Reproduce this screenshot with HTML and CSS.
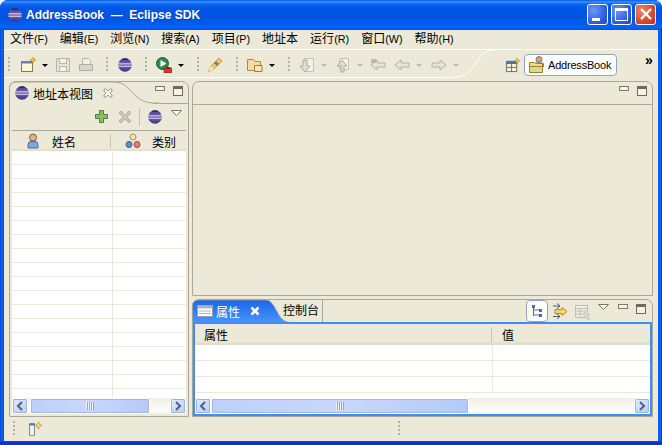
FILE: index.html
```html
<!DOCTYPE html>
<html lang="zh">
<head>
<meta charset="utf-8">
<title>AddressBook - Eclipse SDK</title>
<link rel="stylesheet" href="styles.css">
</head>
<body>
<div class="window">
  <header class="titlebar">
    <svg class="i16 app" viewBox="0 0 16 16"><use href="#eclipse"/></svg>
    <span class="title">AddressBook  —  Eclipse SDK</span>
    <div class="caption">
      <span class="cap"><i class="g-min"></i></span>
      <span class="cap"><i class="g-max"></i></span>
      <span class="cap close"><svg viewBox="0 0 12 12" width="12" height="12"><path d="M1 1l10 10M11 1L1 11" stroke="#fff" stroke-width="2.4"/></svg></span>
    </div>
  </header>
  <div class="client">
    <nav class="menu">
      <span>文件<small>(F)</small></span><span>编辑<small>(E)</small></span><span>浏览<small>(N)</small></span><span>搜索<small>(A)</small></span><span>项目<small>(P)</small></span><span>地址本</span><span>运行<small>(R)</small></span><span>窗口<small>(W)</small></span><span>帮助<small>(H)</small></span>
    </nav>
    <div class="toolbar">
      <svg class="curve" width="654" height="31" viewBox="0 0 654 31"><path d="M0 .5H654M490 .5C474 .5 470 25 458 27C452 28.500 448 28.500 440 28.500H0" stroke="#fff" fill="none"/></svg>
      <i class="grip g1"></i>
      <svg class="tb m1" viewBox="0 0 16 16"><path d="M1.500 4.500h11v10h-11z" fill="#fdf7d8" stroke="#8a7a3e"/><path d="M1.500 4.500h11v2h-11z" fill="#5a8ac6"/><path d="M13 0l1 2 2 1-2 1-1 2-1-2-2-1 2-1z" fill="#f4c430" stroke="#a8801a" stroke-width=".5"/></svg>
      <i class="arrow on m2"></i>
      <svg class="tb m4" viewBox="0 0 16 16"><path d="M1.500 1.500h13v13h-13z" fill="#e4e2da" stroke="#b8b6ac"/><path d="M4.500 1.500h7v5h-7zM4.500 9.500h7v5h-7z" fill="#f2f1ea" stroke="#b8b6ac"/></svg>
      <svg class="tb m5" viewBox="0 0 16 16"><path d="M4.500 1.500h6l2 2v4h-8z" fill="#f0efe8" stroke="#b8b6ac"/><path d="M1.500 7.500h13v6h-13z" fill="#d8d6cc" stroke="#b0aea4"/></svg>
      <i class="grip m6"></i>
      <svg class="tb m7" viewBox="0 0 16 16"><use href="#eclipse"/></svg>
      <i class="grip m8"></i>
      <svg class="tb m9" viewBox="0 0 16 16"><circle cx="6.500" cy="6.500" r="6" fill="#2f8a52" stroke="#1f5f3a"/><path d="M4.500 3l6 3.500-6 3.500z" fill="#fff"/><path d="M8 11h8v5H8z" fill="#d8382c" stroke="#8a1c14" stroke-width=".6"/><path d="M10 10h4v1.500h-4z" fill="#8a1c14"/></svg>
      <i class="arrow on m10"></i>
      <i class="grip m11"></i>
      <svg class="tb m12" viewBox="0 0 16 16"><path d="M1 15l3-6 8-8 3 3-8 8z" fill="#f0c860" stroke="#a88420" stroke-width=".7"/><path d="M4 9l3 3-6 3z" fill="#fbeeb4"/><path d="M7 6l3 3 2-2-3-3z" fill="#7c7c74"/></svg>
      <i class="grip m13"></i>
      <svg class="tb m14" viewBox="0 0 16 16"><path d="M.5 2.500h6l1.500 2h5.500v9H.5z" fill="#f6dc9c" stroke="#b08a3e"/><path d="M7.500 8.500h7.500v6H7.500z" fill="#f9e6b4" stroke="#a07c34"/></svg>
      <i class="arrow on m15"></i>
      <i class="grip m16"></i>
      <svg class="tb m17" viewBox="0 0 16 16"><path d="M5.500 1.500h9v13h-9z" fill="#f2f1ea" stroke="#c4c2b8"/><path d="M4 3v6H1l5 6 5-6H8V3z" fill="#dfddd2" stroke="#aeaca2"/></svg>
      <i class="arrow m18"></i>
      <svg class="tb m19" viewBox="0 0 16 16"><path d="M4.500 1.500h9v11h-9z" fill="#f2f1ea" stroke="#c4c2b8"/><path d="M6 15V9H2l5-6 5 6H9v6z" fill="#dfddd2" stroke="#aeaca2"/></svg>
      <i class="arrow m20"></i>
      <svg class="tb m21" viewBox="0 0 16 16"><path d="M1 8l6-5v3h8v4H7v3z" fill="#e6e4da" stroke="#b4b2a8"/><path d="M1 2h5v4H1z" fill="#a8a69c" opacity=".7"/></svg>
      <svg class="tb m22" viewBox="0 0 16 16"><path d="M1 8l6-5v3h8v4H7v3z" fill="#e6e4da" stroke="#b4b2a8"/></svg>
      <i class="arrow m23"></i>
      <svg class="tb m24" viewBox="0 0 16 16"><path d="M15 8L9 3v3H1v4h8v3z" fill="#e6e4da" stroke="#b4b2a8"/></svg>
      <i class="arrow m25"></i>
      <svg class="persp-new" viewBox="0 0 16 16"><path d="M1.500 3.500h11v11h-11z" fill="#f6f3e2" stroke="#6e6648"/><path d="M1.500 3.500h11v3h-11z" fill="#4a74b0"/><path d="M7 6.500v8M1.500 10h11" stroke="#6e6648" fill="none"/><path d="M13 0l1 2 2 1-2 1-1 2-1-2-2-1 2-1z" fill="#f4c430" stroke="#a8801a" stroke-width=".5"/></svg>
      <div class="persp">
        <svg class="i16 ab" viewBox="0 0 18 18"><use href="#folderperson"/></svg>
        <span>AddressBook</span>
      </div>
      <span class="more">»</span>
    </div>
    <main class="workspace">
      <section class="panel left">
        <div class="tabhead">
          <div class="tabshape">
            <svg class="shape" width="150" height="24" viewBox="0 0 150 24"><path d="M0 23V8Q0 1 7 1H106C122 1 124 22 144 22H150" fill="none" stroke="#aca899"/></svg>
            <svg class="i16 tabicon" viewBox="0 0 16 16"><use href="#eclipse"/></svg>
            <span class="tablabel">地址本视图</span>
            <svg class="tabx" viewBox="0 0 10 10"><path d="M1 1h2l2 2 2-2h2v2L7 5l2 2v2H7L5 7 3 9H1V7l2-2-2-2z" fill="#f4f2e8" stroke="#8a887e" stroke-width=".8"/></svg>
          </div>
          <div class="winctl"><i class="minb"></i><i class="maxb"></i></div>
        </div>
        <div class="viewbar">
          <svg class="tb" viewBox="0 0 16 16"><path d="M5.500 1.500h4v4h4v4h-4v4h-4v-4h-4v-4h4z" fill="#8fc04a" stroke="#4a7a68"/></svg>
          <svg class="tb vdel" viewBox="0 0 16 16"><path d="M2 4l2-2 4 4 4-4 2 2-4 4 4 4-2 2-4-4-4 4-2-2 4-4z" fill="#c8c6bc" stroke="#b4b2a8"/></svg>
          <i class="vsep"></i>
          <svg class="tb" viewBox="0 0 16 16"><use href="#eclipse"/></svg>
          <svg class="dropdown" viewBox="0 0 11 6"><path d="M.5 .5h10l-5 5z" fill="#fbfaf4" stroke="#7b7968"/></svg>
        </div>
        <div class="table tleft">
          <div class="thead">
            <div class="th c1">
              <svg class="i16" viewBox="0 0 16 16"><circle cx="8" cy="4.500" r="3.500" fill="#e8b088" stroke="#7c5a44"/><path d="M3 15v-3.500Q3 8.500 6 8.500h4q3 0 3 3V15z" fill="#7ca8d8" stroke="#4a6f9c"/></svg>
              <span>姓名</span>
            </div>
            <div class="th c2">
              <svg class="i16" viewBox="0 0 16 16"><circle cx="8" cy="4" r="3" fill="#f0e8a0" stroke="#a09a58"/><circle cx="4" cy="11.500" r="3" fill="#5a90c8" stroke="#3a6088"/><circle cx="12" cy="11.500" r="3" fill="#f07878" stroke="#a04848"/></svg>
              <span>类别</span>
            </div>
          </div>
          <div class="rows">
            <div class="row"><i></i><i></i></div><div class="row"><i></i><i></i></div><div class="row"><i></i><i></i></div><div class="row"><i></i><i></i></div><div class="row"><i></i><i></i></div><div class="row"><i></i><i></i></div><div class="row"><i></i><i></i></div><div class="row"><i></i><i></i></div><div class="row"><i></i><i></i></div><div class="row"><i></i><i></i></div><div class="row"><i></i><i></i></div><div class="row"><i></i><i></i></div><div class="row"><i></i><i></i></div><div class="row"><i></i><i></i></div><div class="row"><i></i><i></i></div><div class="row"><i></i><i></i></div><div class="row"><i></i><i></i></div><div class="row"><i></i><i></i></div>
          </div>
          <div class="hscroll">
            <span class="sbtn"><svg viewBox="0 0 8 10" width="8" height="10"><path d="M6 1L2 5l4 4" fill="none" stroke="#4d6185" stroke-width="2"/></svg></span>
            <span class="thumb t-left"><i class="ticks"></i></span>
            <span class="sbtn end"><svg viewBox="0 0 8 10" width="8" height="10"><path d="M2 1l4 4-4 4" fill="none" stroke="#4d6185" stroke-width="2"/></svg></span>
          </div>
        </div>
      </section>
      <div class="rightcol">
        <section class="panel editor">
          <div class="edhead"><div class="winctl"><i class="minb"></i><i class="maxb"></i></div></div>
        </section>
        <section class="panel bottom">
          <div class="btabs">
            <div class="acttab">
              <svg class="shape" width="97" height="24" viewBox="0 0 97 24"><path d="M.5 24V7Q.5 1 6.500 1H74C84 1 85 23 97 23V24z" fill="url(#blue)" stroke="#aca899" stroke-width=".7"/></svg>
              <svg class="i16 tabicon" viewBox="0 0 16 16"><path d="M.5 2.500h15v11H.5z" fill="#fff" stroke="#8fa0b8"/><path d="M.5 2.500h15v3H.5z" fill="#a8b4c4"/><path d="M2 8h12M2 10.500h12" stroke="#a8b4c4"/></svg>
              <span class="tablabel">属性</span>
              <svg class="activex" viewBox="0 0 10 10"><path d="M1.500 1.500l7 7M8.500 1.500l-7 7" stroke="#fff" stroke-width="2.600"/></svg>
            </div>
            <div class="othertab">控制台</div>
            <div class="bctl">
              <span class="toggle"><svg viewBox="0 0 16 16" width="16" height="16"><path d="M4.500 3v10M4.500 7h6M4.500 12h6" stroke="#4a6a98" fill="none"/><path d="M3 2h3v3H3zM10 6h3v3h-3zM10 11h3v3h-3z" fill="#4a6a98"/></svg></span>
              <svg class="tb bc1" viewBox="0 0 16 16"><path d="M1 3h7M5 0.500l3 2.500-3 2.500M1 13.500h7M5 11l3 2.500-3 2.500" stroke="#4e5e70" fill="none"/><path d="M3 6.500h7V4.500l5 4-5 4v-2H3z" fill="#f8d868" stroke="#c08818"/></svg>
              <svg class="tb bc2" viewBox="0 0 16 16"><path d="M.5 1.500h12v12H.5z" fill="#efeee6" stroke="#c0beb4"/><path d="M.5 1.500h12v3H.5zM.5 7h12M.5 10h12M5 4v9" fill="none" stroke="#c0beb4"/><path d="M9 8l6 3-2 1 2 3-2 1-2-3-2 1z" fill="#dcdad0" stroke="#b8b6ac" stroke-width=".5"/></svg>
              <svg class="dropdown bd" viewBox="0 0 11 6"><path d="M.5 .5h10l-5 5z" fill="#fbfaf4" stroke="#7b7968"/></svg>
              <div class="winctl"><i class="minb"></i><i class="maxb"></i></div>
            </div>
          </div>
          <div class="table tbottom">
            <div class="thead">
              <div class="th b1"><span>属性</span></div>
              <div class="th b2"><span>值</span></div>
            </div>
            <div class="rows">
              <div class="row brow"><i></i><i></i></div><div class="row brow"><i></i><i></i></div><div class="row brow"><i></i><i></i></div>
            </div>
            <div class="hscroll">
              <span class="sbtn"><svg viewBox="0 0 8 10" width="8" height="10"><path d="M6 1L2 5l4 4" fill="none" stroke="#4d6185" stroke-width="2"/></svg></span>
              <span class="thumb t-bottom"><i class="ticks"></i></span>
              <span class="sbtn end"><svg viewBox="0 0 8 10" width="8" height="10"><path d="M2 1l4 4-4 4" fill="none" stroke="#4d6185" stroke-width="2"/></svg></span>
            </div>
          </div>
        </section>
      </div>
    </main>
    <footer class="status">
      <i class="grip sg1"></i>
      <svg class="fastview" viewBox="0 0 14 14"><path d="M.5 1.500h5v12h-5z" fill="#eaf3f8" stroke="#84908c"/><path d="M.5 1.500h5v2h-5z" fill="#4a7cb8"/><path d="M9.500 0l1 2.500 2.500 1-2.500 1-1 2.500-1-2.500-2.500-1 2.500-1z" fill="#fbe38a" stroke="#b08a1e" stroke-width=".7"/></svg>
      <i class="grip sg2"></i>
    </footer>
  </div>
</div>
<svg class="defs" width="0" height="0" aria-hidden="true">
  <defs>
    <linearGradient id="blue" x1="0" y1="0" x2="0" y2="1"><stop offset="0" stop-color="#1a66e8"/><stop offset="1" stop-color="#4a95fb"/></linearGradient>
    <linearGradient id="ecl" x1="0" y1="0" x2="0" y2="1"><stop offset="0" stop-color="#3f3a8c"/><stop offset=".5" stop-color="#7a68b8"/><stop offset="1" stop-color="#3a2f80"/></linearGradient>
    <symbol id="eclipse" viewBox="0 0 16 16"><circle cx="8" cy="8" r="6.800" fill="url(#ecl)"/><path d="M1.500 6.800h13M1.500 9.300h13" stroke="#e8e6f4" stroke-width=".9"/><path d="M4 2.700A6.800 6.800 0 0 1 12 2.700z" fill="#2a2470"/></symbol>
    <symbol id="folderperson" viewBox="0 0 18 18"><circle cx="10" cy="3.500" r="3" fill="#d8a070" stroke="#8a5a3a" stroke-width=".8"/><path d="M5 11V8.500Q5 6.500 7 6.500h6q2 0 2 2V11z" fill="#4a86c0"/><path d="M.5 6.500h5l1 1h7v9H.5z" fill="#f5d88a" stroke="#a87c2c"/><path d="M.5 10.500h13" stroke="#a87c2c"/><path d="M1 11h12v5H1z" fill="#cfe08e"/></symbol>
  </defs>
</svg>
</body>
</html>
```

FILE: styles.css
```css
* { box-sizing: border-box; }
html, body { margin: 0; padding: 0; height: 100%; background: #fff; }
body { width: 662px; height: 445px; overflow: hidden; font-family: "Liberation Sans", "Noto Sans CJK SC", sans-serif; font-size: 12px; color: #000; }
i { display: block; font-style: normal; }
.defs { position: absolute; }

.window { width: 662px; height: 445px; display: flex; flex-direction: column; border-radius: 8px 8px 0 0; overflow: hidden; background: linear-gradient(0deg, #0831d9 0, #0831d9 2px, #0a45dd 4px, transparent 4px), linear-gradient(90deg, #0831d9 0, #166aee 1px, #0855dd 3px, #0855dd 658px, #166aee 660px, #0831d9 662px); }
.titlebar { height: 30px; flex: none; display: flex; align-items: center; padding: 0 6px 0 7px; background: linear-gradient(180deg, #0058ee 0, #3a93ff 2px, #0a66f0 4px, #0055e5 8px, #0054e0 18px, #0060f0 25px, #0066ff 27px, #0050d8 30px); }
.app { margin-right: 3px; }
.i16 { width: 16px; height: 16px; flex: none; display: block; }
.title { color: #fff; font-weight: 700; font-size: 12px; text-shadow: 1px 1px 0 #0f3fb0; white-space: pre; }
.caption { margin-left: auto; display: flex; gap: 3px; margin-top: -2px; }
.cap { width: 21px; height: 21px; border: 1px solid #fff; border-radius: 3px; background: radial-gradient(circle at 30% 30%, #6c9af5, #2f60e2 60%, #1c48c8); display: flex; align-items: center; justify-content: center; position: relative; }
.cap.close { background: radial-gradient(circle at 30% 30%, #e88868, #d84a28 60%, #b83010); }
.g-min { width: 8px; height: 3px; background: #fff; margin-top: 10px; margin-right: 3px; }
.g-max { width: 13px; height: 13px; border: 1px solid #fff; border-top-width: 3px; }

.client { flex: 1; min-height: 0; margin: 0 4px 4px; background: #ece9d8; display: flex; flex-direction: column; }
.menu { height: 19px; flex: none; display: flex; gap: 12px; align-items: center; padding: 0 0 0 6px; white-space: nowrap; line-height: 19px; }
.menu span { display: block; }
.menu small { font-size: 10.800px; }

.toolbar { height: 31px; flex: none; display: flex; align-items: center; position: relative; padding-top: 1px; }
.curve { position: absolute; left: 0; top: 0; }
.tb { width: 16px; height: 16px; flex: none; display: block; position: relative; }
.grip { width: 2px; height: 16px; flex: none; position: relative; background: repeating-linear-gradient(180deg, #b4b2a4 0, #b4b2a4 2px, transparent 2px, transparent 4px); }
.arrow { width: 0; height: 0; flex: none; position: relative; border: 3px solid transparent; border-top: 3px solid #bdbbb0; border-bottom: 0; }
.arrow.on { border-top-color: #000; }
.g1 { margin-left: 4px; }
.m1 { margin-left: 10px; } .m2 { margin-left: 6px; } .m4 { margin-left: 7px; } .m5 { margin-left: 7px; }
.m6 { margin-left: 12px; } .m7 { margin-left: 9px; } .m8 { margin-left: 12px; } .m9 { margin-left: 9px; } .m10 { margin-left: 6px; }
.m11 { margin-left: 13px; } .m12 { margin-left: 8px; } .m13 { margin-left: 13px; } .m14 { margin-left: 9px; } .m15 { margin-left: 6px; }
.m16 { margin-left: 13px; } .m17 { margin-left: 9px; } .m18 { margin-left: 6px; } .m19 { margin-left: 8px; } .m20 { margin-left: 6px; }
.m21 { margin-left: 7px; } .m22 { margin-left: 8px; } .m23 { margin-left: 6px; } .m24 { margin-left: 9px; } .m25 { margin-left: 6px; }
.persp-new { width: 15px; height: 15px; flex: none; margin-left: 46px; display: block; position: relative; }
.persp { width: 93px; height: 22px; flex: none; margin-left: 4px; border: 1px solid #90a4c0; border-radius: 4px; background: #fff; display: flex; align-items: center; padding-left: 4px; gap: 1px; font-size: 11px; letter-spacing: -.2px; position: relative; }
.ab { width: 18px; height: 18px; }
.more { margin-left: 28px; margin-top: -10px; font-weight: 700; font-size: 14px; position: relative; }

.workspace { height: 337px; flex: none; display: flex; gap: 3px; padding: 1px 5px 0; }
.panel { border: 1px solid #aca899; border-radius: 7px 7px 0 0; }
.left { width: 180px; flex: none; height: 336px; display: flex; flex-direction: column; }
.tabhead { height: 22px; flex: none; display: flex; justify-content: flex-end; position: relative; }
.tabshape { position: absolute; left: -1px; top: -1px; width: 150px; height: 24px; display: flex; align-items: center; padding: 0 0 0 5px; }
.tabhead::after { content: ""; position: absolute; left: 143px; right: 0; bottom: 0; height: 1px; background: #aca899; }
.shape { position: absolute; left: 0; top: 0; }
.tabicon { position: relative; }
.tablabel { margin-left: 3px; position: relative; }
.tabx { width: 10px; height: 10px; margin-left: 10px; position: relative; display: block; }
.winctl { display: flex; gap: 8px; margin: 4px 5px 0 0; position: relative; height: 12px; }
.minb { width: 10px; height: 5px; border: 1px solid #7b7968; background: #f4f2e8; }
.maxb { width: 10px; height: 10px; border: 1px solid #6b695a; border-top-width: 3px; background: #f4f2e8; }
.viewbar { height: 26px; flex: none; display: flex; align-items: center; padding-left: 84px; position: relative; }
.vdel { margin-left: 7px; }
.vsep { width: 1px; height: 18px; background: #c4c2b4; margin: 0 7px 0 6px; }
.dropdown { width: 11px; height: 6px; flex: none; display: block; position: relative; margin: -8px 0 0 8px; }

.table { flex: 1; min-height: 0; display: flex; flex-direction: column; overflow: hidden; }
.tleft { margin: 0 2px 2px; border-top: 1px solid #aca899; }
.thead { height: 20px; flex: none; display: flex; background: linear-gradient(180deg, #ece9d8 0, #ece9d8 17px, #dedbc8 20px); }
.th { display: flex; align-items: center; position: relative; }
.th.c1 { width: 99px; padding-left: 13px; gap: 11px; }
.th.c2 { flex: 1; padding-left: 14px; gap: 11px; }
.th.c1::after, .th.b1::after { content: ""; position: absolute; right: 0; top: 3px; bottom: 3px; width: 1px; background: #c8c6b6; }
.rows { flex: 1; min-height: 0; overflow: hidden; background: #fff; }
.row { height: 14px; display: flex; border-bottom: 1px solid #ece9d8; }
.row i:first-child { width: 101px; border-right: 1px solid #ece9d8; }
.hscroll { height: 16px; flex: none; display: flex; align-items: stretch; background: linear-gradient(180deg, #f0eee4, #fcfbf8 80%, #f4f3ec); padding: 0; position: relative; }
.sbtn { width: 16px; flex: none; border: 1px solid #fff; border-radius: 2px; background: linear-gradient(135deg, #e2ebfe, #b8cbf8); display: flex; align-items: center; justify-content: center; outline: 1px solid #9fb4e6; outline-offset: -2px; }
.sbtn.end { margin-left: auto; }
.thumb { margin-left: 2px; border: 1px solid #fff; border-radius: 2px; background: linear-gradient(90deg, #bcd0fb, #c8d8fc 50%, #b4c9f8); display: flex; align-items: center; justify-content: center; outline: 1px solid #a0b8ea; outline-offset: -2px; }
.t-left { width: 120px; }
.t-bottom { width: 258px; margin-left: 0; }
.ticks { width: 8px; height: 8px; background: repeating-linear-gradient(90deg, #eef3ff 0, #eef3ff 1px, #8fa8d8 1px, #8fa8d8 2px); }

.rightcol { flex: 1; min-width: 0; display: flex; flex-direction: column; gap: 3px; height: 336px; }
.editor { height: 215px; flex: none; }
.edhead { height: 23px; border-bottom: 1px solid #aca899; display: flex; justify-content: flex-end; }
.bottom { flex: 1; min-height: 0; display: flex; flex-direction: column; }
.btabs { height: 22px; flex: none; display: flex; position: relative; }
.acttab { width: 91px; height: 24px; flex: none; display: flex; align-items: center; position: relative; color: #fff; padding: 0 0 0 5px; margin-top: -1px; margin-left: -1px; }
.activex { width: 10px; height: 10px; margin-left: 10px; position: relative; display: block; }
.othertab { width: 40px; flex: none; line-height: 22px; border-right: 1px solid #aca899; position: relative; height: 22px; }
.bctl { margin-left: auto; display: flex; align-items: flex-start; position: relative; }
.toggle { width: 22px; height: 22px; border: 1px solid #90a4c0; border-radius: 4px; background: #fff; display: flex; align-items: center; justify-content: center; }
.bc1 { margin: 3px 0 0 4px; }
.bc2 { margin: 4px 0 0 7px; }
.dropdown.bd { margin: 4px 0 0 7px; }
.bctl .winctl { margin: 4px 6px 0 9px; }
.tbottom { border: 2px solid #3f8cf3; margin: 0; position: relative; }
.tbottom .thead { height: 21px; }
.th.b1 { width: 297px; padding-left: 9px; }
.th.b2 { flex: 1; padding-left: 10px; }
.brow { height: 16px; }
.brow i:first-child { width: 298px; }

.status { flex: 1; min-height: 0; display: flex; align-items: center; position: relative; }
.grip.sg1 { margin-left: 9px; }
.fastview { width: 14px; height: 14px; flex: none; margin-left: 14px; display: block; }
.grip.sg2 { margin-left: 355px; }
```
